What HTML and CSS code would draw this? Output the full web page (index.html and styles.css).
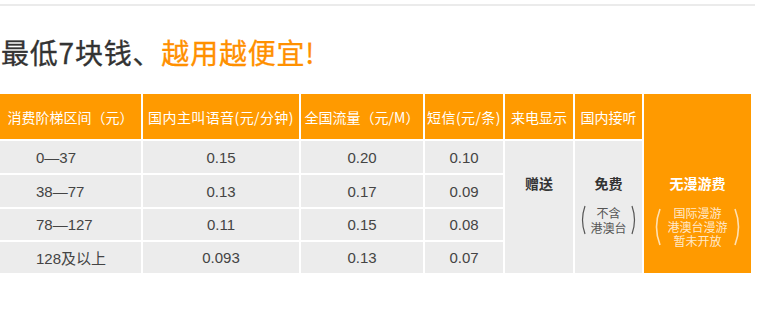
FILE: index.html
```html
<!DOCTYPE html>
<html lang="zh">
<head>
<meta charset="utf-8">
<link rel="stylesheet" href="styles.css">
</head>
<body>
<div class="topline"></div>
<h1 class="title">最低7块钱、<span class="hl">越用越便宜!</span></h1>
<div class="grid">
  <div class="th">消费阶梯区间（元）</div>
  <div class="th tight">国内主叫语音(元/分钟)</div>
  <div class="th">全国流量（元/M）</div>
  <div class="th tight">短信(元/条)</div>
  <div class="th">来电显示</div>
  <div class="th">国内接听</div>
  <div class="roam">
    <div class="strong">无漫游费</div>
    <div class="paren-block light">
      <svg class="pl" viewBox="0 0 8 38" width="8" height="38"><path d="M7 1 Q0 19 7 37"/></svg>
      <div class="plines">
        <div class="pline">国际漫游</div>
        <div class="pline">港澳台漫游</div>
        <div class="pline">暂未开放</div>
      </div>
      <svg class="pr" viewBox="0 0 8 38" width="8" height="38"><path d="M1 1 Q8 19 1 37"/></svg>
    </div>
  </div>

  <div class="td first">0—37</div><div class="td">0.15</div><div class="td">0.20</div><div class="td">0.10</div>
  <div class="merged c5"><div class="strong">赠送</div></div>
  <div class="merged c6">
    <div class="strong">免费</div>
    <div class="paren-block dark">
      <svg class="pl" viewBox="0 0 6 30" width="6" height="30"><path d="M5 1 Q0 15 5 29"/></svg>
      <div class="plines">
        <div class="pline">不含</div>
        <div class="pline">港澳台</div>
      </div>
      <svg class="pr" viewBox="0 0 6 30" width="6" height="30"><path d="M1 1 Q6 15 1 29"/></svg>
    </div>
  </div>

  <div class="td first">38—77</div><div class="td">0.13</div><div class="td">0.17</div><div class="td">0.09</div>
  <div class="td first">78—127</div><div class="td">0.11</div><div class="td">0.15</div><div class="td">0.08</div>
  <div class="td first">128及以上</div><div class="td">0.093</div><div class="td">0.13</div><div class="td">0.07</div>
</div>
</body>
</html>
```

FILE: styles.css
```css
* { box-sizing: border-box; }
html, body { margin: 0; padding: 0; background: #fff; }
body {
  width: 770px;
  height: 309px;
  overflow: hidden;
  font-family: "Liberation Sans", "Noto Sans CJK SC", sans-serif;
}
.topline {
  margin-top: 4px;
  width: 755px;
  height: 2px;
  background: #ebebeb;
}
.title {
  margin: 29px 0 0 1px;
  font-family: "Noto Sans CJK SC", sans-serif;
  font-weight: 400;
  font-size: 28px;
  line-height: 35px;
  height: 35px;
  color: #333;
  letter-spacing: 0.8px;
  white-space: nowrap;
  -webkit-text-stroke: 0.3px #333;
}
.title .hl { color: #ff9000; -webkit-text-stroke: 0.3px #ff9000; }
.grid {
  margin-top: 24px;
  width: 751px;
  display: grid;
  grid-template-columns: 141px 156px 122px 78px 68px 67px 107px;
  grid-template-rows: 45px 32px 32px 31px 31px;
  gap: 2px;
  background: #fff;
}
.th {
  background: #ff9a00;
  color: #fff;
  font-family: "Noto Sans CJK SC", sans-serif;
  font-size: 14px;
  display: flex;
  align-items: center;
  justify-content: center;
  white-space: nowrap;
}
.th.tight {
  letter-spacing: 0.4px;
}
.td {
  background: #ececec;
  color: #444;
  font-size: 15px;
  display: flex;
  align-items: center;
  justify-content: center;
}
.td.first { justify-content: flex-start; padding-left: 36px; }
.roam {
  grid-column: 7;
  grid-row: 1 / span 5;
  background: #ff9a00;
  color: #fff;
  display: flex;
  flex-direction: column;
  align-items: center;
  padding-top: 79px;
}
.merged {
  grid-row: 2 / span 4;
  background: #ececec;
  color: #333;
  display: flex;
  flex-direction: column;
  align-items: center;
  padding-top: 32px;
}
.c5 { grid-column: 5; }
.c6 { grid-column: 6; }
.strong {
  font-family: "Noto Sans CJK SC", sans-serif;
  font-weight: 700;
  font-size: 14px;
  line-height: 20px;
}
.paren-block {
  display: flex;
  align-items: center;
  gap: 4px;
  margin-top: 12px;
}
.paren-block svg path { fill: none; stroke-width: 1.2; }
.paren-block.dark svg path { stroke: #555; }
.paren-block.light svg path { stroke: rgba(255,255,255,0.7); stroke-width: 1.6; }
.paren-block.light { margin-top: 13px; gap: 6px; }
.plines {
  font-family: "Noto Sans CJK SC", sans-serif;
  font-size: 12px;
  text-align: center;
  display: flex;
  flex-direction: column;
  align-items: center;
}
.pline {
  height: 14px;
  line-height: 14px;
  white-space: nowrap;
}
.paren-block.dark .pline { color: #555; height: 15px; line-height: 15px; }
.paren-block.light .pline { color: rgba(255,255,255,0.8); height: 14px; line-height: 14px; }
```
